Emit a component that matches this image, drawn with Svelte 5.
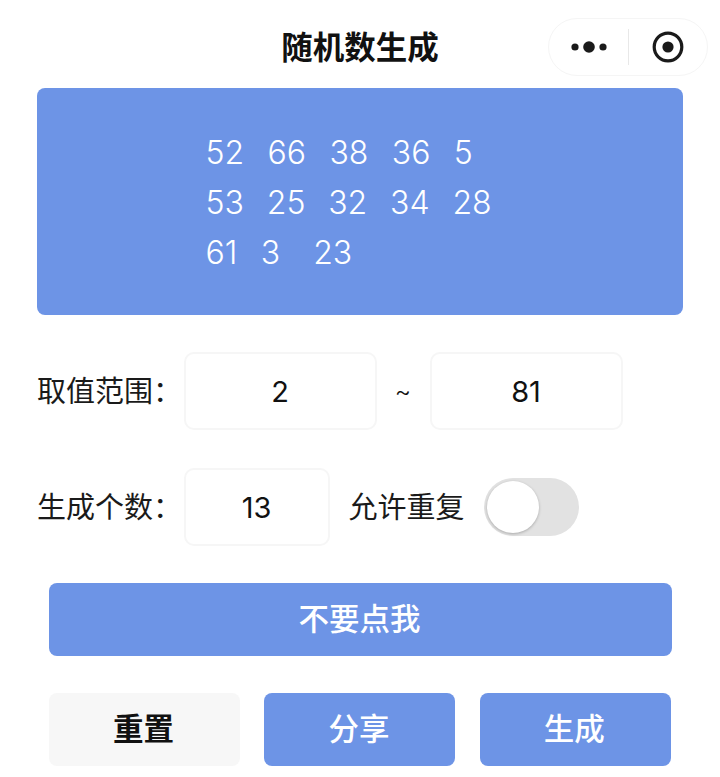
<script>
	let numbers = [52, 66, 38, 36, 5, 53, 25, 32, 34, 28, 61, 3, 23];
	let min = 2;
	let max = 81;
	let count = 13;
	let allowRepeat = false;

	// five numbers per line
	let lines = [];
	for (let i = 0; i < numbers.length; i += 5) {
		lines.push(numbers.slice(i, i + 5));
	}
</script>

<div class="page">
	<header class="nav">
		<h1>随机数生成</h1>
		<div class="capsule">
			<svg class="more" width="36" height="14" viewBox="0 0 36 14">
				<circle cx="4" cy="7" r="3.6" />
				<circle cx="18" cy="7" r="5.8" />
				<circle cx="32" cy="7" r="3.6" />
			</svg>
			<span class="divider"></span>
			<svg class="target" width="32" height="32" viewBox="0 0 32 32">
				<circle cx="16" cy="16" r="13.8" fill="none" stroke="#1a1a1a" stroke-width="3.2" />
				<circle cx="16" cy="16" r="5.6" fill="#1a1a1a" />
			</svg>
		</div>
	</header>

	<section class="result">
		<div class="numbers">
			{#each lines as line, l (l)}
				<div class="line">
					{#each line as n, i (i)}
						<span class="num">{n}</span>
					{/each}
				</div>
			{/each}
		</div>
	</section>

	<div class="row range">
		<span class="label">取值范围：</span>
		<input class="box wide" bind:value={min} />
		<span class="tilde">~</span>
		<input class="box wide" bind:value={max} />
	</div>

	<div class="row amount">
		<span class="label">生成个数：</span>
		<input class="box small" bind:value={count} />
		<span class="repeat">允许重复</span>
		<button class="switch" class:on={allowRepeat} aria-label="允许重复" on:click={() => (allowRepeat = !allowRepeat)}>
			<span class="thumb"></span>
		</button>
	</div>

	<div class="actions">
		<button class="btn primary full">不要点我</button>
		<div class="btn-row">
			<button class="btn plain">重置</button>
			<button class="btn primary">分享</button>
			<button class="btn primary">生成</button>
		</div>
	</div>
</div>

<style>
	:global(body) {
		background: #fff;
		color: #111;
		font-family: Inter, 'Noto Sans CJK SC', sans-serif;
	}

	.page {
		width: 720px;
		height: 777px;
		overflow: hidden;
	}

	.nav {
		position: relative;
		height: 88px;
		display: flex;
		align-items: center;
		justify-content: center;
		padding-top: 2px;
		box-sizing: border-box;
	}
	.nav h1 {
		margin: 0;
		font-size: 31.5px;
		font-weight: 700;
		color: #111;
	}
	.capsule {
		position: absolute;
		left: 548px;
		top: 18px;
		width: 160px;
		height: 58px;
		box-sizing: border-box;
		border: 1px solid #f5f5f5;
		border-radius: 29px;
		display: flex;
		align-items: center;
	}
	.more {
		margin-left: 22px;
		fill: #1a1a1a;
	}
	.divider {
		width: 1px;
		height: 36px;
		background: #e8e8e8;
		margin-left: 21px;
	}
	.target {
		margin-left: 23px;
	}

	.result {
		margin: 0 37px;
		height: 227px;
		padding-top: 2px;
		box-sizing: border-box;
		background: #6d94e6;
		border-radius: 8px;
		display: flex;
		justify-content: center;
		align-items: center;
	}
	.numbers {
		width: 309px;
		color: #fff;
		font-size: 32px;
		line-height: 50px;
		font-weight: 300;
	}
	.line {
		display: flex;
		white-space: nowrap;
	}
	.num {
		min-width: 29px;
		margin-right: 23.4px;
	}

	.row {
		display: flex;
		align-items: center;
		margin-left: 37px;
		height: 78px;
	}
	.range {
		margin-top: 37px;
	}
	.amount {
		margin-top: 38px;
	}
	.label {
		width: 147px;
		margin-right: -0.5px;
		padding-bottom: 4px;
		font-size: 29px;
		white-space: nowrap;
		color: #1a1a1a;
	}
	.box {
		box-sizing: border-box;
		height: 78px;
		padding: 0;
		border: 2px solid #f6f6f6;
		border-radius: 10px;
		background: #fff;
		outline: none;
		text-align: center;
		font-family: inherit;
		font-size: 29px;
		color: #111;
	}
	.wide {
		width: 193px;
	}
	.small {
		width: 146px;
	}
	.tilde {
		width: 53px;
		text-align: center;
		font-size: 25px;
		font-weight: 300;
	}
	.repeat {
		margin-left: 19px;
		padding-bottom: 4px;
		font-size: 29px;
		color: #1a1a1a;
		white-space: nowrap;
	}
	.switch {
		position: relative;
		width: 95px;
		height: 58px;
		margin-left: 19px;
		padding: 0;
		border: 0;
		border-radius: 29px;
		background: #e2e2e2;
	}
	.thumb {
		position: absolute;
		left: 3px;
		top: 3px;
		width: 52px;
		height: 52px;
		border-radius: 50%;
		background: #fff;
		box-shadow: 0 1px 3px rgba(0, 0, 0, 0.25);
	}
	.switch.on {
		background: #6d94e6;
	}
	.switch.on .thumb {
		left: 40px;
	}

	.actions {
		margin: 37px 48px 0 49px;
		display: flex;
		flex-direction: column;
		gap: 37px;
	}
	.btn {
		height: 73px;
		padding: 0 2px 5px 0;
		border: 0;
		border-radius: 8px;
		font-family: inherit;
		font-size: 30.5px;
		font-weight: 500;
	}
	.btn.primary {
		background: #6d94e6;
		color: #fff;
	}
	.btn.plain {
		background: #f7f7f7;
		color: #111;
		font-weight: 700;
	}
	.btn-row {
		display: grid;
		grid-template-columns: repeat(3, 191px);
		gap: 24.4px;
	}
</style>
